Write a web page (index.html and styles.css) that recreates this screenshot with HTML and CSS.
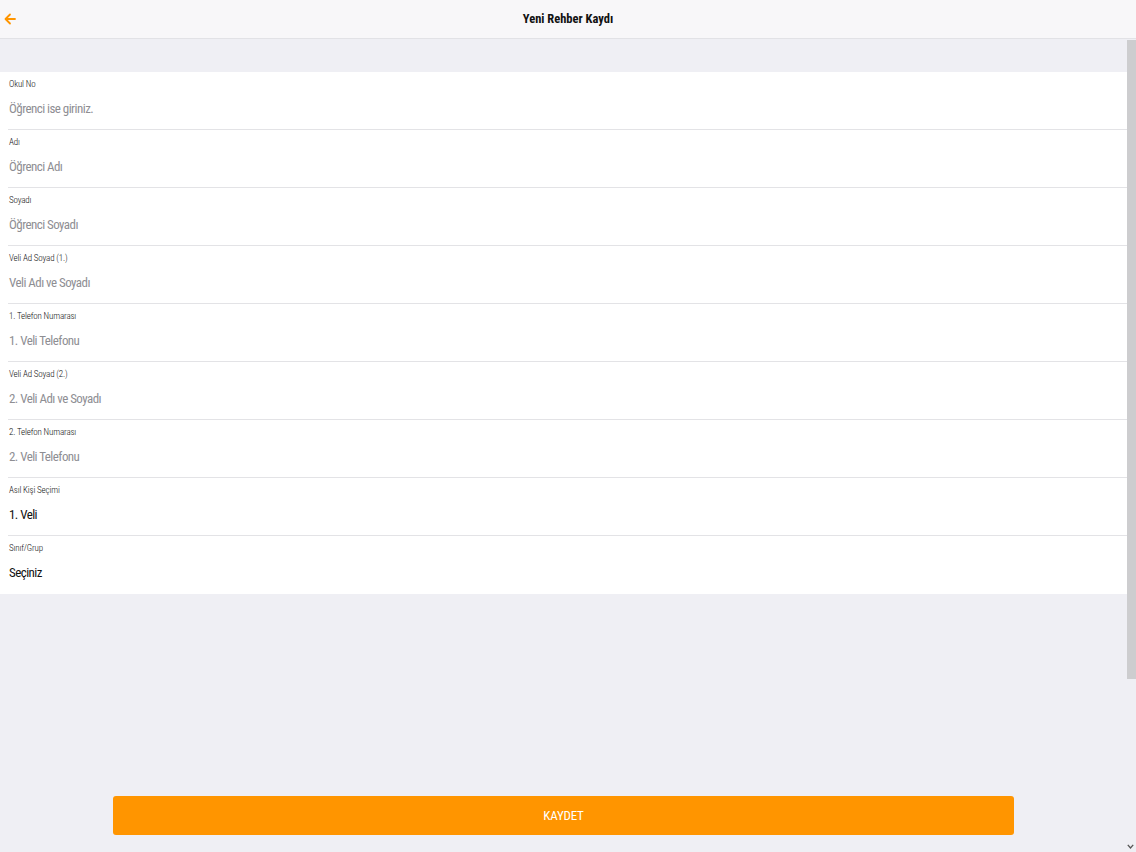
FILE: index.html
```html
<!DOCTYPE html>
<html lang="tr">
<head>
<meta charset="utf-8">
<title>Yeni Rehber Kaydı</title>
<link rel="stylesheet" href="styles.css">
</head>
<body>
<div class="app">
  <header class="topbar">
    <button class="back" aria-label="Geri">
      <svg width="12" height="12" viewBox="0 0 12 12"><path d="M11 6H1.8M6 1.5L1.5 6 6 10.5" fill="none" stroke="#ff9500" stroke-width="1.8" stroke-linecap="round" stroke-linejoin="round"/></svg>
    </button>
    <h1 class="title">Yeni Rehber Kaydı</h1>
  </header>
  <div class="body">
    <main class="content">
      <div class="band"></div>
      <section class="form">
        <div class="row"><div class="label">Okul No</div><div class="value ph">Öğrenci ise giriniz.</div></div>
        <div class="row"><div class="label">Adı</div><div class="value ph">Öğrenci Adı</div></div>
        <div class="row"><div class="label">Soyadı</div><div class="value ph">Öğrenci Soyadı</div></div>
        <div class="row"><div class="label">Veli Ad Soyad (1.)</div><div class="value ph">Veli Adı ve Soyadı</div></div>
        <div class="row"><div class="label">1. Telefon Numarası</div><div class="value ph">1. Veli Telefonu</div></div>
        <div class="row"><div class="label">Veli Ad Soyad (2.)</div><div class="value ph">2. Veli Adı ve Soyadı</div></div>
        <div class="row"><div class="label">2. Telefon Numarası</div><div class="value ph">2. Veli Telefonu</div></div>
        <div class="row"><div class="label">Asıl Kişi Seçimi</div><div class="value">1. Veli</div></div>
        <div class="row last"><div class="label">Sınıf/Grup</div><div class="value">Seçiniz</div></div>
      </section>
      <div class="footer">
        <button class="save">KAYDET</button>
      </div>
    </main>
    <div class="scrollbar"><div class="thumb"></div></div>
    <svg class="down" width="7" height="5" viewBox="0 0 7 5"><path d="M0.8 0.8L3.5 4 6.2 0.8" fill="none" stroke="#555" stroke-width="1.3"/></svg>
  </div>
</div>
</body>
</html>
```
FILE: styles.css
```css
* { box-sizing: border-box; }
html, body { margin: 0; padding: 0; }
body {
  width: 1136px;
  height: 852px;
  overflow: hidden;
  background: #efeff4;
  font-family: "Liberation Sans Narrow", "Roboto Condensed", "Arial Narrow", "DejaVu Sans Condensed", sans-serif;
  color: #222;
}
.app { display: flex; flex-direction: column; height: 852px; }
.topbar {
  height: 39px;
  flex: none;
  background: #f8f7f9;
  border-bottom: 1px solid #e2e2e6;
  display: flex;
  align-items: center;
  justify-content: center;
  position: relative;
}
.back {
  position: absolute;
  left: 3px;
  top: 12px;
  width: 14px;
  height: 14px;
  padding: 0;
  border: 0;
  background: none;
  display: flex;
  align-items: center;
  justify-content: center;
}
.title {
  margin: 0;
  font-size: 12.5px;
  font-weight: bold;
  color: #111;
  line-height: 16px;
}
.body { flex: 1; display: flex; position: relative; min-height: 0; }
.content { flex: 1; display: flex; flex-direction: column; }
.band { height: 33px; flex: none; }
.form { background: #fff; }
.row {
  height: 58px;
  padding: 6px 0 0 9px;
  position: relative;
}
.row::after {
  content: "";
  position: absolute;
  left: 8px;
  right: 0;
  bottom: 0;
  height: 1px;
  background: #e3e3e6;
}
.row.last::after { display: none; }
.label {
  font-size: 9px;
  font-weight: 300;
  line-height: 13px;
  letter-spacing: -0.15px;
  color: #111;
}
.value {
  margin-top: 8px;
  font-size: 13px;
  font-weight: 400;
  letter-spacing: -0.55px;
  line-height: 20px;
  color: #111;
}
.value.ph { color: #8e8e93; }
.footer {
  margin-top: auto;
  padding: 0 0 17px 113px;
}
.save {
  width: 901px;
  height: 39px;
  border: 0;
  border-radius: 3px;
  background: #ff9500;
  color: #fff;
  font-family: inherit;
  font-size: 13px;
  font-weight: 400;
  letter-spacing: -0.2px;
  display: block;
}
.scrollbar {
  width: 9px;
  flex: none;
  padding-top: 1px;
}
.thumb {
  height: 639px;
  background: #cdcdcf;
}
.down { position: absolute; right: 2px; bottom: 3px; }
```
